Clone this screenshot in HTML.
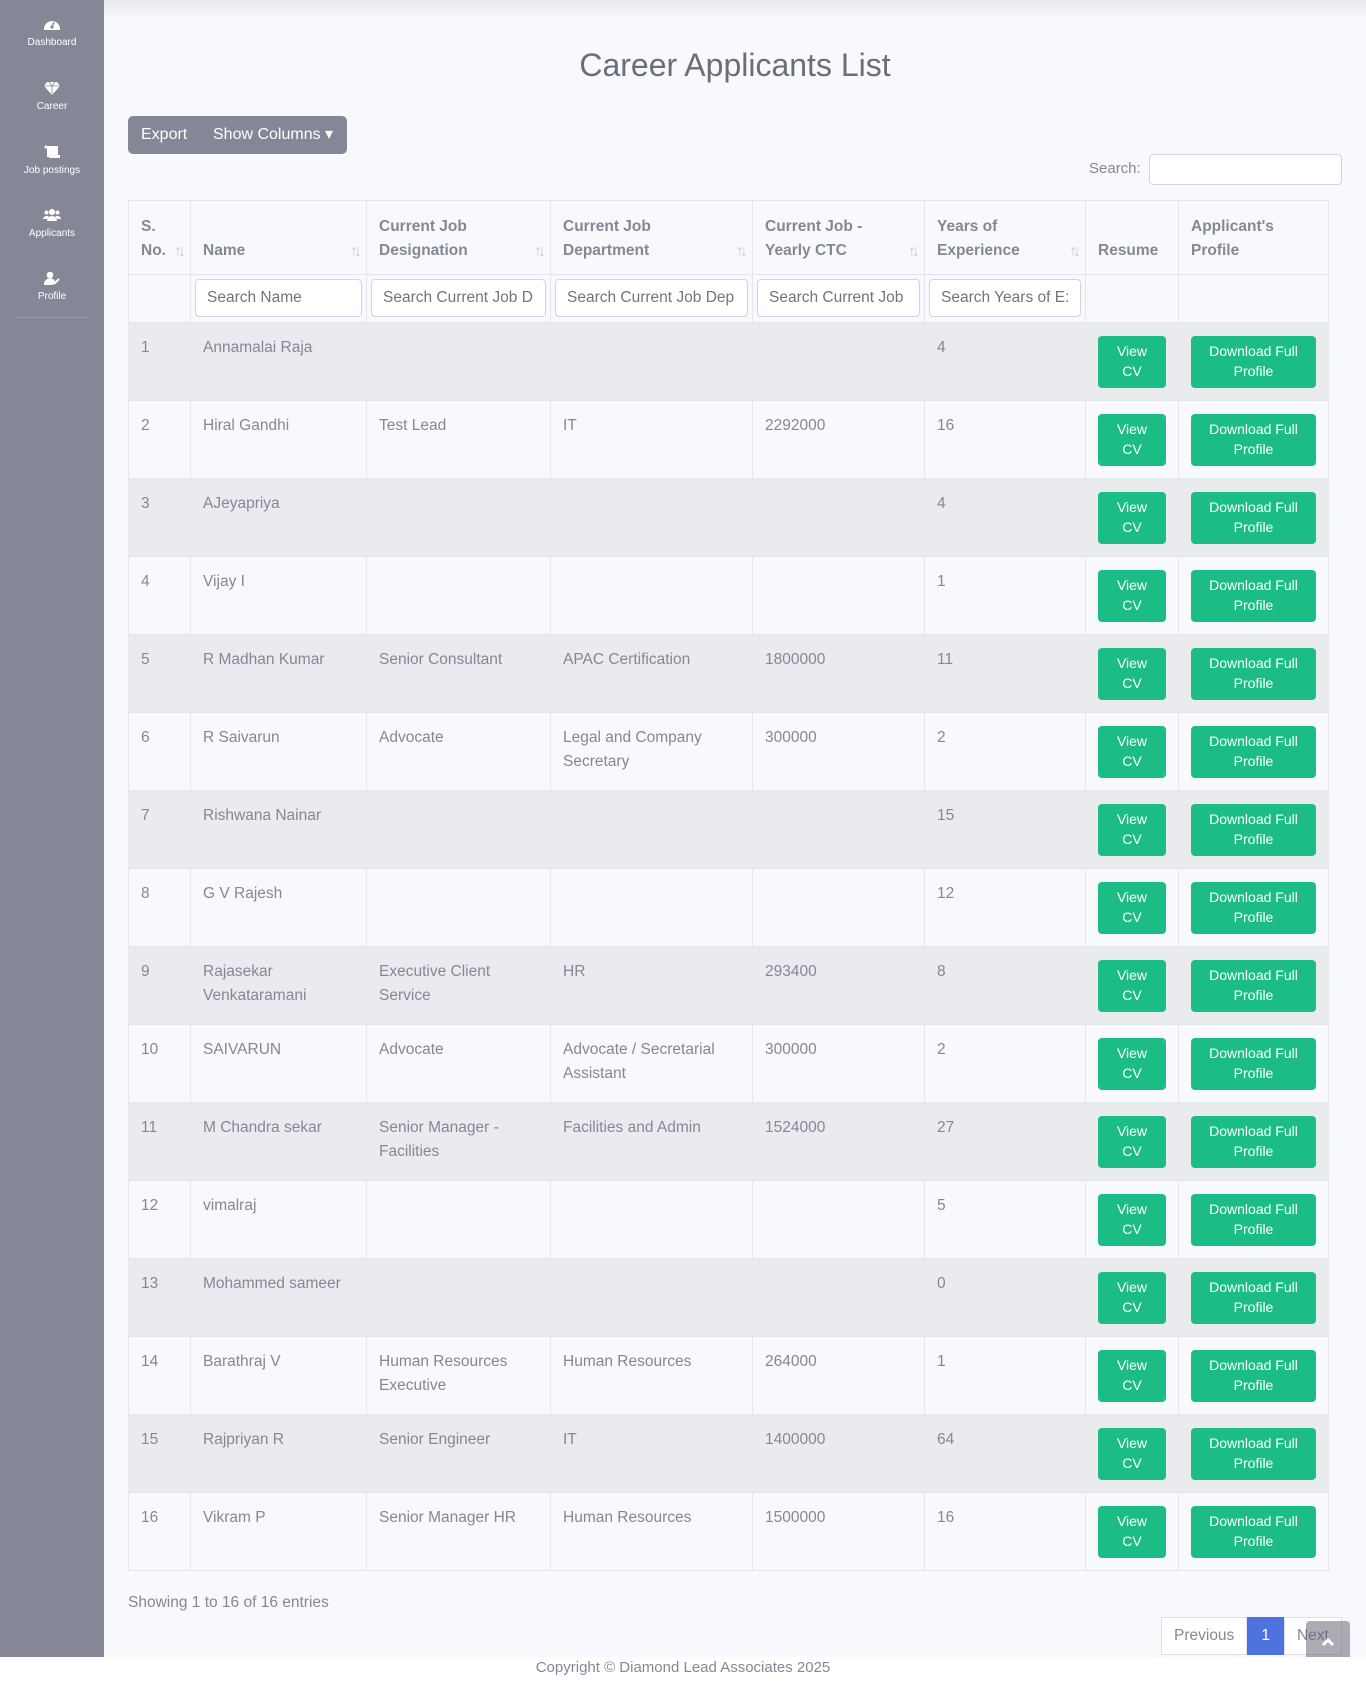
<!DOCTYPE html>
<html><head><meta charset="utf-8">
<style>
*{box-sizing:border-box;margin:0;padding:0}
html,body{width:1366px;height:1681px;overflow:hidden;background:#fff;font-family:"Liberation Sans",sans-serif;color:#858796}
#side{position:absolute;left:0;top:0;width:104px;height:1657px;background:#858796}
.nav{position:absolute;left:0;width:104px;text-align:center;color:#fff;font-size:10px}
.nav svg{display:block;margin:0 auto 6px}
#divider{position:absolute;left:14px;top:317px;width:76px;height:1px;background:#9a9ca9}
#main{position:absolute;left:104px;top:0;width:1262px;height:1657px;background:#f8f9fc}
#topsh{position:absolute;left:104px;top:0;width:1262px;height:18px;background:linear-gradient(#e8e9ee,#f8f9fc)}
h1{position:absolute;left:104px;width:1262px;top:47px;text-align:center;font-weight:normal;font-size:32px;color:#6b6d7a}
#btns{position:absolute;left:128px;top:116px;width:219px;height:38px;background:#858796;border-radius:5px;color:#fff;font-size:16px;line-height:38px}
#btns span{position:absolute}
#slabel{position:absolute;left:1089px;top:160px;font-size:15px}
#sinput{position:absolute;left:1149px;top:154px;width:193px;height:31px;border:1px solid #d1d3e2;border-radius:4px;background:#fff}
table{position:absolute;left:128px;top:200px;width:1200px;border-collapse:collapse;table-layout:fixed;font-size:15.5px}
td,th{border:1px solid #e3e6f0;vertical-align:top;padding:13px 12px 0;line-height:24px;text-align:left}
th{height:74px;vertical-align:bottom;padding-bottom:11px;font-weight:bold;position:relative;background:#f8f9fc}
th .ar{position:absolute;right:8px;bottom:10px;color:#c8cad3;font-size:16px;font-weight:normal;letter-spacing:-4px}
tr.f td{height:48px;padding:4px 4px 0;background:#f8f9fc}
.f input{width:100%;height:38px;border:1px solid #d1d3e2;border-radius:4px;padding:0 11px;font:15.5px "Liberation Sans",sans-serif;color:#858796;background:#fff}
tbody tr td{height:78px;background:#f8f9fc}
tbody tr.o td{background:#eaebef;border-left-color:#eaebef;border-right-color:#eaebef}
.b{display:block;background:#1cbd85;color:#fff;border-radius:4px;text-align:center;font-size:14px;line-height:20px;padding:5px 0;height:52px}
td.bc{padding:13px 12px 0}
#show{position:absolute;left:128px;top:1594px;font-size:15.5px}
#pag{position:absolute;left:1161px;top:1617px;height:38px;display:flex;font-size:15.5px;line-height:36px}
#pag div{border:1px solid #dddfeb;background:#fff;padding:0 12px}
#pag .a{background:#4e73df;color:#fff;border-color:#4e73df;padding:0 13px}
#up{position:absolute;left:1306px;top:1621px;width:44px;height:36px;background:rgba(90,92,105,.5);border-radius:4px 4px 0 0}
#copy{position:absolute;left:0;width:1366px;top:1659px;text-align:center;font-size:15px;color:#858796}
</style></head><body>
<div id="side">
 <div class="nav" style="top:17px"><svg width="16" height="14" viewBox="0 0 16 14"><path d="M0 12A8 8 0 0 1 16 12L16 13H0Z" fill="#fff"/><circle cx="8" cy="10" r="1.6" fill="#858796"/><path d="M8 10L10 5" stroke="#858796" stroke-width="1.3"/></svg>Dashboard</div>
 <div class="nav" style="top:81px"><svg width="16" height="14" viewBox="0 0 16 14"><path d="M3 1H13L16 5L8 14L0 5Z" fill="#fff"/><path d="M0 5H16M5 1L8 5L11 1M8 5L8 13" stroke="#858796" stroke-width=".8" fill="none"/></svg>Career</div>
 <div class="nav" style="top:145px"><svg width="16" height="14" viewBox="0 0 16 14"><rect x="3" y="1" width="11" height="11" fill="#fff"/><rect x="5" y="10" width="11" height="3" fill="#fff"/><circle cx="2" cy="2" r="1.5" fill="#fff"/></svg>Job postings</div>
 <div class="nav" style="top:208px"><svg width="18" height="14" viewBox="0 0 18 14"><circle cx="9" cy="4" r="3" fill="#fff"/><circle cx="3.5" cy="4.5" r="2" fill="#fff"/><circle cx="14.5" cy="4.5" r="2" fill="#fff"/><path d="M4 13A5 5 0 0 1 14 13Z M0 11A3.5 3.5 0 0 1 6 9L5 11Z M18 11A3.5 3.5 0 0 0 12 9L13 11Z" fill="#fff"/></svg>Applicants</div>
 <div class="nav" style="top:271px"><svg width="16" height="14" viewBox="0 0 16 14"><circle cx="6" cy="4" r="3.3" fill="#fff"/><path d="M0 14A6 6 0 0 1 11 10L9 14Z" fill="#fff"/><path d="M10 13L15 8" stroke="#fff" stroke-width="2"/></svg>Profile</div>
 <div id="divider"></div>
</div>
<div id="main"></div>
<div id="topsh"></div>
<h1>Career Applicants List</h1>
<div id="btns"><span style="left:13px">Export</span><span style="left:85px">Show Columns &#9662;</span></div>
<div id="slabel">Search:</div><div id="sinput"></div>
<table>
<colgroup><col style="width:62px"><col style="width:176px"><col style="width:184px"><col style="width:202px"><col style="width:172px"><col style="width:161px"><col style="width:93px"><col style="width:150px"></colgroup>
<thead>
<tr><th>S.<br>No.<span class="ar">↑↓</span></th><th>Name<span class="ar">↑↓</span></th><th>Current Job<br>Designation<span class="ar">↑↓</span></th><th>Current Job<br>Department<span class="ar">↑↓</span></th><th>Current Job -<br>Yearly CTC<span class="ar">↑↓</span></th><th>Years of<br>Experience<span class="ar">↑↓</span></th><th>Resume</th><th>Applicant's<br>Profile</th></tr>
<tr class="f"><td></td><td><input placeholder="Search Name"></td><td><input placeholder="Search Current Job D"></td><td><input placeholder="Search Current Job Dep"></td><td><input placeholder="Search Current Job"></td><td><input placeholder="Search Years of E:"></td><td></td><td></td></tr>
</thead>
<tbody>
<tr class="o"><td>1</td><td>Annamalai Raja</td><td></td><td></td><td></td><td>4</td><td class="bc"><span class="b">View<br>CV</span></td><td class="bc"><span class="b">Download Full<br>Profile</span></td></tr>
<tr><td>2</td><td>Hiral Gandhi</td><td>Test Lead</td><td>IT</td><td>2292000</td><td>16</td><td class="bc"><span class="b">View<br>CV</span></td><td class="bc"><span class="b">Download Full<br>Profile</span></td></tr>
<tr class="o"><td>3</td><td>AJeyapriya</td><td></td><td></td><td></td><td>4</td><td class="bc"><span class="b">View<br>CV</span></td><td class="bc"><span class="b">Download Full<br>Profile</span></td></tr>
<tr><td>4</td><td>Vijay I</td><td></td><td></td><td></td><td>1</td><td class="bc"><span class="b">View<br>CV</span></td><td class="bc"><span class="b">Download Full<br>Profile</span></td></tr>
<tr class="o"><td>5</td><td>R Madhan Kumar</td><td>Senior Consultant</td><td>APAC Certification</td><td>1800000</td><td>11</td><td class="bc"><span class="b">View<br>CV</span></td><td class="bc"><span class="b">Download Full<br>Profile</span></td></tr>
<tr><td>6</td><td>R Saivarun</td><td>Advocate</td><td>Legal and Company Secretary</td><td>300000</td><td>2</td><td class="bc"><span class="b">View<br>CV</span></td><td class="bc"><span class="b">Download Full<br>Profile</span></td></tr>
<tr class="o"><td>7</td><td>Rishwana Nainar</td><td></td><td></td><td></td><td>15</td><td class="bc"><span class="b">View<br>CV</span></td><td class="bc"><span class="b">Download Full<br>Profile</span></td></tr>
<tr><td>8</td><td>G V Rajesh</td><td></td><td></td><td></td><td>12</td><td class="bc"><span class="b">View<br>CV</span></td><td class="bc"><span class="b">Download Full<br>Profile</span></td></tr>
<tr class="o"><td>9</td><td>Rajasekar Venkataramani</td><td>Executive Client Service</td><td>HR</td><td>293400</td><td>8</td><td class="bc"><span class="b">View<br>CV</span></td><td class="bc"><span class="b">Download Full<br>Profile</span></td></tr>
<tr><td>10</td><td>SAIVARUN</td><td>Advocate</td><td>Advocate / Secretarial Assistant</td><td>300000</td><td>2</td><td class="bc"><span class="b">View<br>CV</span></td><td class="bc"><span class="b">Download Full<br>Profile</span></td></tr>
<tr class="o"><td>11</td><td>M Chandra sekar</td><td>Senior Manager - Facilities</td><td>Facilities and Admin</td><td>1524000</td><td>27</td><td class="bc"><span class="b">View<br>CV</span></td><td class="bc"><span class="b">Download Full<br>Profile</span></td></tr>
<tr><td>12</td><td>vimalraj</td><td></td><td></td><td></td><td>5</td><td class="bc"><span class="b">View<br>CV</span></td><td class="bc"><span class="b">Download Full<br>Profile</span></td></tr>
<tr class="o"><td>13</td><td>Mohammed sameer</td><td></td><td></td><td></td><td>0</td><td class="bc"><span class="b">View<br>CV</span></td><td class="bc"><span class="b">Download Full<br>Profile</span></td></tr>
<tr><td>14</td><td>Barathraj V</td><td>Human Resources Executive</td><td>Human Resources</td><td>264000</td><td>1</td><td class="bc"><span class="b">View<br>CV</span></td><td class="bc"><span class="b">Download Full<br>Profile</span></td></tr>
<tr class="o"><td>15</td><td>Rajpriyan R</td><td>Senior Engineer</td><td>IT</td><td>1400000</td><td>64</td><td class="bc"><span class="b">View<br>CV</span></td><td class="bc"><span class="b">Download Full<br>Profile</span></td></tr>
<tr><td>16</td><td>Vikram P</td><td>Senior Manager HR</td><td>Human Resources</td><td>1500000</td><td>16</td><td class="bc"><span class="b">View<br>CV</span></td><td class="bc"><span class="b">Download Full<br>Profile</span></td></tr>
</tbody></table>
<div id="show">Showing 1 to 16 of 16 entries</div>
<div id="pag"><div>Previous</div><div class="a">1</div><div>Next</div></div>
<div id="up"><svg width="44" height="36" viewBox="0 0 44 36"><path d="M17 24L22 19L27 24" stroke="#fff" stroke-width="3" fill="none"/></svg></div>
<div id="copy">Copyright © Diamond Lead Associates 2025</div>
</body></html>
